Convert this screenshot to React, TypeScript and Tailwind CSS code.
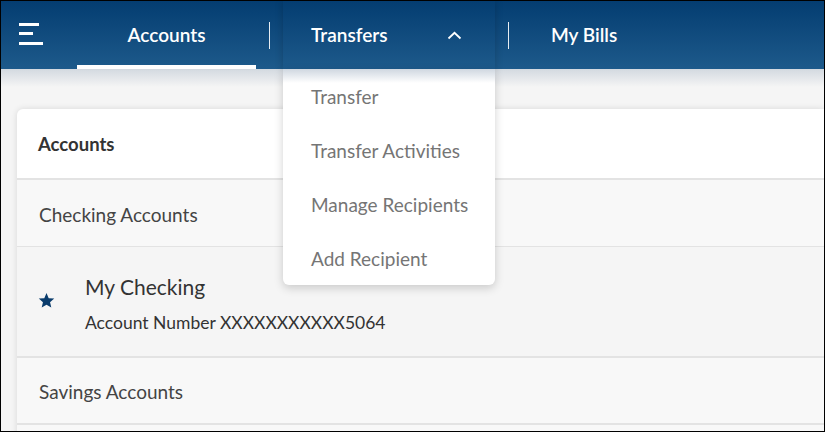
import React from "react";

export default function App() {
  const font = { fontFamily: "Lato, 'Noto Sans', sans-serif" };
  return (
    <div className="w-[825px] h-[432px] border border-black overflow-hidden relative bg-[#f5f5f5]" style={font}>
      {/* header */}
      <div className="h-[68px] bg-gradient-to-b from-[#043d71] to-[#1d5a8b] flex items-stretch relative z-10">
        <div className="w-[76px] flex items-center pl-[18px]">
          <svg width="26" height="24" viewBox="0 0 26 24">
            <rect x="0" y="0" width="20" height="3" fill="#fff" />
            <rect x="0" y="9" width="14" height="3" fill="#fff" />
            <rect x="0" y="19" width="24" height="3" fill="#fff" />
          </svg>
        </div>
        <div className="w-[179px] relative flex items-center justify-center text-white text-[19px] font-semibold pt-[1px]">
          Accounts
          <div className="absolute left-0 right-0 bottom-0 h-[4px] bg-white" />
        </div>
        <div className="w-[27px] flex items-center justify-center">
          <div className="w-px h-[27px] bg-white/90" />
        </div>
        <div className="w-[212px] flex items-center pl-[28px] text-white text-[19px] font-semibold bg-gradient-to-b from-[#043d71] to-[#1d5a8b] shadow-[0_0_8px_rgba(0,0,0,0.2)] pt-[1px]">
          <span>Transfers</span>
          <svg className="ml-[59px]" width="15" height="9" viewBox="0 0 15 9">
            <path d="M1.5 7.5 L7.5 1.8 L13.5 7.5" stroke="#fff" strokeWidth="1.8" fill="none" />
          </svg>
        </div>
        <div className="w-[27px] flex items-center justify-center">
          <div className="w-px h-[27px] bg-white/90" />
        </div>
        <div className="flex items-center pl-[29px] text-white text-[19px] font-semibold pt-[1px]">My Bills</div>
      </div>
      {/* shadow under header */}
      <div className="absolute left-0 right-0 top-[68px] h-[18px] bg-gradient-to-b from-[#d3d9e0] to-[#f5f5f5]" />

      {/* content */}
      <div className="relative pl-[16px] pt-[40px]">
        <div className="bg-white rounded-tl-[6px] shadow-[0_0_6px_rgba(0,0,0,0.12)]">
          <div className="h-[69px] flex items-center pl-[21px] pt-[3px] text-[18.5px] font-bold text-[#333]">Accounts</div>
          <div className="h-[2px] bg-[#e3e3e3]" />
          <div className="h-[66px] flex items-center pl-[22px] pt-[4px] bg-[#f8f8f8] text-[19px] text-[#444]">Checking Accounts</div>
          <div className="h-px bg-[#e3e3e3]" />
          <div className="h-[109px] bg-[#f5f5f5] flex items-center">
            <div className="w-[68px] shrink-0 pl-[21px] flex items-center pb-[2px]">
              <svg width="17" height="17" viewBox="0 0 24 24">
                <path d="M12 1.5l3.1 7.2 7.8.6-5.9 5.1 1.8 7.6L12 18l-6.8 4 1.8-7.6-5.9-5.1 7.8-.6z" fill="#0a3c6c" />
              </svg>
            </div>
            <div className="flex flex-col pt-[6px]">
              <div className="text-[21px] text-[#333] leading-[26px]">My Checking</div>
              <div className="text-[17.5px] text-[#333] leading-[24px] mt-[11px]">Account Number XXXXXXXXXXX5064</div>
            </div>
          </div>
          <div className="h-[2px] bg-[#e3e3e3]" />
          <div className="h-[65px] flex items-center pl-[22px] pt-[4px] bg-[#f8f8f8] text-[19px] text-[#444]">Savings Accounts</div>
          <div className="h-[2px] bg-[#e3e3e3]" />
          <div className="h-[20px] bg-[#f8f8f8]" />
        </div>
      </div>

      {/* dropdown */}
      <div className="absolute left-[282px] top-[68px] w-[212px] h-[216px] bg-white rounded-b-[6px] shadow-[0_3px_10px_rgba(0,0,0,0.18)] z-20 flex flex-col pt-[1px] pl-[28px] text-[19px] text-[#757575]">
        <div className="h-[54px] shrink-0 flex items-center">Transfer</div>
        <div className="h-[54px] shrink-0 flex items-center">Transfer Activities</div>
        <div className="h-[54px] shrink-0 flex items-center">Manage Recipients</div>
        <div className="h-[54px] shrink-0 flex items-center">Add Recipient</div>
      </div>
      <div className="absolute left-[282px] top-[68px] w-[212px] h-[14px] bg-gradient-to-b from-[#cfd7e0] to-transparent z-30" />
    </div>
  );
}
